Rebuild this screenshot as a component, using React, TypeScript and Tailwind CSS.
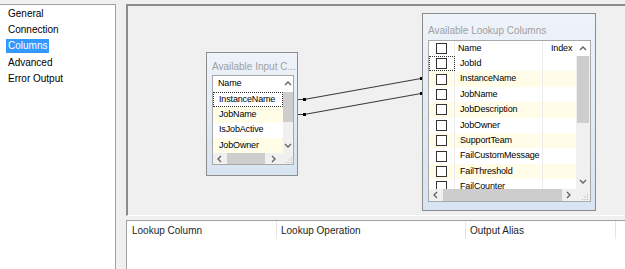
import React from "react";

const pages = ["General", "Connection", "Columns", "Advanced", "Error Output"];
const inputColumns = ["InstanceName", "JobName", "IsJobActive", "JobOwner"];
const lookupColumns = [
  "JobId",
  "InstanceName",
  "JobName",
  "JobDescription",
  "JobOwner",
  "SupportTeam",
  "FailCustomMessage",
  "FailThreshold",
  "FailCounter",
];

type Dir = "up" | "down" | "left" | "right";

function Arrow({ dir }: { dir: Dir }) {
  const points = {
    up: "1,5 4,2 7,5",
    down: "1,2 4,5 7,2",
    left: "5,1 2,4 5,7",
    right: "2,1 5,4 2,7",
  }[dir];
  return (
    <svg width="8" height="8" viewBox="0 0 8 8">
      <polyline points={points} fill="none" stroke="#606060" strokeWidth="1.3" />
    </svg>
  );
}

function Grip() {
  const dots = [[6, 1], [6, 3.5], [3.5, 3.5], [6, 6], [3.5, 6], [1, 6]];
  return (
    <svg width="8" height="8" viewBox="0 0 8 8">
      {dots.map(([x, y]) => (
        <rect key={`${x}-${y}`} x={x} y={y} width="1" height="1" fill="#b0b0b0" />
      ))}
    </svg>
  );
}

function Checkbox() {
  return <span className="block h-[11px] w-[11px] border border-[#333333] bg-white" />;
}

function InputNode() {
  return (
    <div className="absolute left-[78px] top-[46px] h-[124px] w-[92px] border border-[#8c8c8c] bg-gradient-to-b from-[#eef3f9] to-[#d8e4f2] pl-[5px] pr-[3px]">
      <div className="h-[22px] pt-[8px] text-[10px] leading-[12px] text-[#a0a0a0] whitespace-nowrap">Available Input C...</div>
      <div className="flex h-[90px] w-[82px] flex-col border border-[#a8a8a8] bg-white text-[9px] tracking-[-0.15px]">
        <div className="flex h-[77px]">
          <div className="w-[70px] overflow-hidden">
            <div className="flex h-[16px] items-center pl-[5px]">Name</div>
            {inputColumns.map((name, i) => (
              <div
                key={name}
                className={`flex h-[15.25px] items-center pl-[6px] ${i % 2 ? "bg-[#fffde8]" : "bg-white"} ${
                  i === 0 ? "outline outline-1 outline-dotted outline-[#333] -outline-offset-1" : ""
                }`}
              >
                {name}
              </div>
            ))}
          </div>
          <div className="flex w-[10px] flex-col bg-[#f0f0f0]">
            <div className="flex h-[16px] items-center justify-center bg-white"><Arrow dir="up" /></div>
            <div className="h-[30px] bg-[#cdcdcd]" />
            <div className="flex-1" />
            <div className="flex h-[14px] items-center justify-center"><Arrow dir="down" /></div>
          </div>
        </div>
        <div className="flex h-[11px] bg-[#f0f0f0]">
          <div className="flex w-[14px] items-center justify-center"><Arrow dir="left" /></div>
          <div className="w-[38px] bg-[#cdcdcd]" />
          <div className="flex w-[18px] items-center justify-center"><Arrow dir="right" /></div>
          <div className="flex w-[10px] items-end justify-end"><Grip /></div>
        </div>
      </div>
    </div>
  );
}

function LookupNode() {
  return (
    <div className="absolute left-[294px] top-[7px] h-[198px] w-[174px] border border-[#8c8c8c] bg-gradient-to-b from-[#eef3f9] to-[#d8e4f2] pl-[5px] pr-[4px]">
      <div className="h-[26px] pt-[11px] text-[10px] leading-[12px] text-[#a0a0a0] whitespace-nowrap">Available Lookup Columns</div>
      <div className="flex h-[162px] w-[163px] flex-col border border-[#a8a8a8] bg-white text-[9px] tracking-[-0.15px]">
        <div className="flex h-[148px]">
          <div className="w-[147px] overflow-hidden">
            <div className="flex h-[15px]">
              <div className="flex w-[26px] items-center justify-center border-r border-[#ececec]"><Checkbox /></div>
              <div className="flex w-[88px] items-center border-r border-[#ececec] pl-[3px]">Name</div>
              <div className="flex w-[33px] items-center pl-[8px]">Index</div>
            </div>
            {lookupColumns.map((name, i) => (
              <div key={name} className={`flex h-[15.4px] ${i % 2 ? "bg-[#fffde8]" : "bg-white"}`}>
                <div
                  className={`flex w-[26px] items-center justify-center border-r border-[#ececec] ${
                    i === 0 ? "outline outline-1 outline-dotted outline-[#333] -outline-offset-1" : ""
                  }`}
                >
                  <Checkbox />
                </div>
                <div className="flex w-[88px] items-center border-r border-[#ececec] pl-[5px]">{name}</div>
                <div className="w-[33px]" />
              </div>
            ))}
          </div>
          <div className="flex w-[14px] flex-col bg-[#f0f0f0]">
            <div className="flex h-[15px] items-center justify-center bg-white"><Arrow dir="up" /></div>
            <div className="mx-[1px] h-[67px] bg-[#cdcdcd]" />
            <div className="flex-1" />
            <div className="flex h-[14px] items-center justify-center"><Arrow dir="down" /></div>
          </div>
        </div>
        <div className="flex h-[12px] bg-[#f0f0f0]">
          <div className="flex w-[14px] items-center justify-center"><Arrow dir="left" /></div>
          <div className="w-[119px] bg-[#cdcdcd]" />
          <div className="flex w-[14px] items-center justify-center"><Arrow dir="right" /></div>
          <div className="flex w-[14px] items-end justify-end pr-[1px]"><Grip /></div>
        </div>
      </div>
    </div>
  );
}

function Links() {
  const lines = [
    { y1: 93, y2: 72 },
    { y1: 108, y2: 87 },
  ];
  return (
    <svg className="pointer-events-none absolute left-0 top-0" width="400" height="210">
      {lines.map(({ y1, y2 }) => (
        <g key={y1}>
          <polyline points={`170,${y1 + 0.5} 176,${y1 + 0.5} 293,${y2 + 0.5} 294,${y2 + 0.5}`} fill="none" stroke="#3a3a3a" strokeWidth="1.2" />
          <rect x="175" y={y1 - 1} width="3" height="3" fill="#000" />
          <rect x="292" y={y2 - 1} width="3" height="3" fill="#000" />
        </g>
      ))}
    </svg>
  );
}

export default function App() {
  return (
    <div className="flex h-[269px] w-[625px] overflow-hidden bg-[#f0f0f0] pt-[4px] font-['Liberation_Sans',Arial,sans-serif] text-black">
      <div className="h-full w-[116px] shrink-0 border-t border-r border-[#a0a0a0] bg-white pt-[1px] text-[10px]">
        {pages.map((page) => (
          <div key={page} className="flex h-[16.2px] items-center pl-[6px]">
            <span className={`px-[2px] leading-[14px] ${page === "Columns" ? "bg-[#3399ff] text-white" : ""}`}>{page}</span>
          </div>
        ))}
      </div>
      <div className="ml-[10px] flex flex-1 flex-col">
        <div className="relative h-[212px] border-l-2 border-t-2 border-b border-l-[#8c8c8c] border-t-[#8c8c8c] border-b-white bg-[#f0f0f0]">
          <Links />
          <InputNode />
          <LookupNode />
        </div>
        <div className="mt-[4px] flex-1 border-l border-t border-[#a0a0a0] bg-white text-[10px] text-[#1e1e1e]">
          <div className="flex h-[19px]">
            <div className="flex h-[18px] w-[150px] items-center border-r border-[#e5e5e5] pl-[5px]">Lookup Column</div>
            <div className="flex h-[18px] w-[189px] items-center border-r border-[#e5e5e5] pl-[4px]">Lookup Operation</div>
            <div className="flex h-[18px] w-[150px] items-center border-r border-[#e5e5e5] pl-[4px]">Output Alias</div>
          </div>
        </div>
      </div>
    </div>
  );
}
